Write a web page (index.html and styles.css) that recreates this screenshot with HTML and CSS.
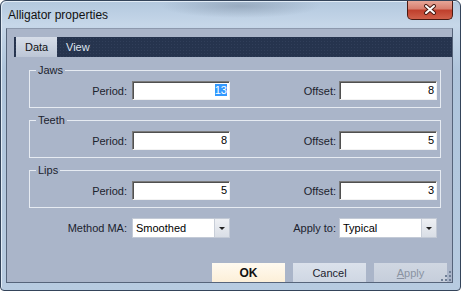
FILE: index.html
```html
<!DOCTYPE html>
<html>

<head>
    <link rel="stylesheet" href="styles.css">
</head>

<body>
    <div class="window">
        <!-- Title bar -->
        <div class="titlebar">
            <span class="title">Alligator properties</span>
            <div class="close">
                <svg width="14" height="11" viewBox="0 0 14 11">
                    <path d="M3 2 L11 9 M11 2 L3 9" stroke="#4a1c14" stroke-width="4" stroke-linecap="round" />
                    <path d="M3 2 L11 9 M11 2 L3 9" stroke="#ffffff" stroke-width="2" stroke-linecap="round" />
                </svg>
            </div>
        </div>

        <div class="client">
            <div class="tabs">
                <div class="tab active">Data</div>
                <div class="tab">View</div>
            </div>

            <div class="page">
                <fieldset class="group">
                    <legend>Jaws</legend>
                    <div class="row">
                        <label>Period:</label>
                        <div class="field"><span class="sel">13</span></div>
                        <label class="second">Offset:</label>
                        <div class="field">8</div>
                    </div>
                </fieldset>

                <fieldset class="group">
                    <legend>Teeth</legend>
                    <div class="row">
                        <label>Period:</label>
                        <div class="field">8</div>
                        <label class="second">Offset:</label>
                        <div class="field">5</div>
                    </div>
                </fieldset>

                <fieldset class="group">
                    <legend>Lips</legend>
                    <div class="row">
                        <label>Period:</label>
                        <div class="field">5</div>
                        <label class="second">Offset:</label>
                        <div class="field">3</div>
                    </div>
                </fieldset>

                <div class="row extra">
                    <label>Method MA:</label>
                    <div class="combo"><span>Smoothed</span><span class="drop"><i></i></span></div>
                    <label class="second">Apply to:</label>
                    <div class="combo"><span>Typical</span><span class="drop"><i></i></span></div>
                </div>
            </div>

            <div class="buttons">
                <div class="btn ok">OK</div>
                <div class="btn cancel">Cancel</div>
                <div class="btn apply"><u>A</u>pply</div>
            </div>

            <svg class="grip" width="11" height="11" viewBox="0 0 11 11">
                <rect x="8" y="0" width="2" height="2" fill="#6f7f96" />
                <rect x="8" y="4" width="2" height="2" fill="#6f7f96" />
                <rect x="4" y="4" width="2" height="2" fill="#6f7f96" />
                <rect x="8" y="8" width="2" height="2" fill="#6f7f96" />
                <rect x="4" y="8" width="2" height="2" fill="#6f7f96" />
                <rect x="0" y="8" width="2" height="2" fill="#6f7f96" />
            </svg>
        </div>
    </div>
</body>

</html>
```

FILE: styles.css
```css
/* Dialog window */
body {
    margin: 0;
    font-family: "Liberation Sans", Arial, sans-serif;
    font-size: 11px;
    color: #1c232e;
}

.window {
    width: 461px;
    height: 291px;
    box-sizing: border-box;
    border: 1px solid #34445a;
    border-radius: 6px 6px 4px 4px;
    background:
        radial-gradient(ellipse 80px 12px at 240px 5px, rgba(95, 110, 130, 0.35), transparent),
        linear-gradient(to bottom, #b3c8de, #c6d7e9 24px, #aec4db 70px, #b7cbe0);
    box-shadow: inset 1px 1px 0 #e2ecf6;
    display: flex;
    flex-direction: column;
    overflow: hidden;
}

.titlebar {
    height: 27px;
    display: flex;
    align-items: flex-start;
}

.title {
    padding: 7px 0 0 7px;
    font-size: 12px;
    line-height: 15px;
    color: #111;
}

.close {
    margin: -1px 7px 0 auto;
    width: 46px;
    height: 20px;
    box-sizing: border-box;
    border: 1px solid #4a1a12;
    border-top: none;
    border-radius: 0 0 5px 5px;
    background: linear-gradient(#e9ab9d, #d98070 45%, #c0402d 55%, #d0604a);
    display: flex;
    align-items: center;
    justify-content: center;
}

/* Client area */
.client {
    flex: 1;
    margin: 0 7px 7px 5px;
    border: 1px solid #56647a;
    border-top-color: #8d99ad;
    background: #aab5c9;
    display: flex;
    flex-direction: column;
    position: relative;
}

.tabs {
    display: flex;
    height: 20px;
    margin: 8px 0 0 7px;
    padding-left: 2px;
    background-color: #26344e;
    background-image: radial-gradient(circle, #313f5a 0.6px, transparent 0.8px);
    background-size: 3px 3px;
}

.tab {
    width: 41px;
    box-sizing: border-box;
    padding-left: 9px;
    line-height: 20px;
    color: #dfe5ee;
}

.tab.active {
    background: linear-gradient(#d6dde8, #bcc6d6);
    color: #111;
}

.page {
    padding: 7px 0 0 22px;
}

.group {
    width: 412px;
    box-sizing: border-box;
    margin: 0;
    padding: 4px 0 7px;
    border: 1px solid #e6ebf2;
}

.group + .group {
    margin-top: 6px;
}

.group legend {
    margin-left: 6px;
    padding: 0 2px;
    line-height: 13px;
}

.row {
    display: grid;
    grid-template-columns: 102px 98px 109px 98px;
    align-items: center;
}

.row label {
    text-align: right;
    padding-right: 5px;
}

.row label.second {
    padding-right: 3px;
}

.field {
    height: 19px;
    box-sizing: border-box;
    background: #fff;
    border: 1px solid;
    border-color: #7b7b7b #f2f2f2 #f2f2f2 #7b7b7b;
    box-shadow: inset 1px 1px 0 #505050;
    text-align: right;
    padding-right: 2px;
    line-height: 17px;
    color: #000;
}

.sel {
    background: #3399ff;
    color: #fff;
}

.extra {
    margin: 10px 0 0 1px;
}

.combo {
    height: 20px;
    box-sizing: border-box;
    background: #fff;
    border: 1px solid #c3cad6;
    display: flex;
    align-items: center;
    padding-left: 3px;
    color: #000;
}

.drop {
    margin-left: auto;
    width: 15px;
    height: 18px;
    box-sizing: border-box;
    background: linear-gradient(#eef0f4, #d9dee6);
    border-left: 1px solid #c8ced8;
    display: flex;
    align-items: center;
    justify-content: center;
}

.drop i {
    border-left: 3px solid transparent;
    border-right: 3px solid transparent;
    border-top: 3px solid #222;
}

/* Bottom buttons */
.buttons {
    margin-top: auto;
    display: flex;
    justify-content: flex-end;
    gap: 8px;
    padding-right: 5px;
}

.btn {
    width: 73px;
    height: 19px;
    box-sizing: border-box;
    display: flex;
    align-items: center;
    justify-content: center;
    color: #1c232e;
}

.ok {
    background: linear-gradient(#fffaf0, #fcefd8);
    font-size: 12px;
    font-weight: bold;
    color: #111;
}

.cancel {
    background: linear-gradient(#dbe1eb, #cfd7e3);
}

.apply {
    background: linear-gradient(#d0d7e2, #c6cedb);
    color: #8a93a2;
}

.grip {
    position: absolute;
    right: 0;
    bottom: 0;
}
```
